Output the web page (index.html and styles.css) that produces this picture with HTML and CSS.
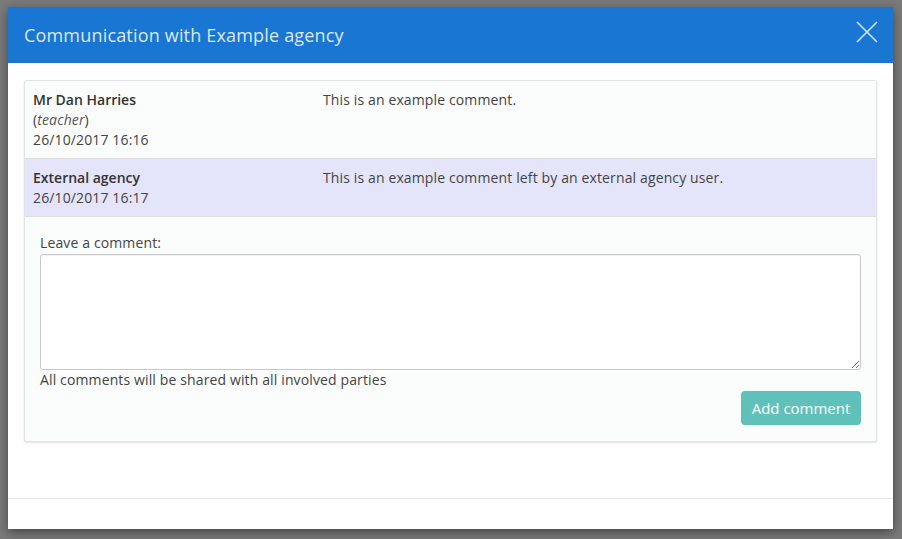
FILE: index.html
```html
<!DOCTYPE html>
<html lang="en">
<head>
<meta charset="utf-8">
<title>Communication with Example agency</title>
<link rel="stylesheet" href="styles.css">
</head>
<body>
<div class="backdrop">
  <div class="modal">
    <div class="modal-header">
      <h1 class="modal-title">Communication with Example agency</h1>
      <button class="close" aria-label="Close">
        <svg width="22" height="22" viewBox="0 0 22 22"><path d="M1 1 L21 21 M21 1 L1 21" stroke="#d2e3f6" stroke-width="1.6" fill="none"/></svg>
      </button>
    </div>
    <div class="modal-body">
      <div class="panel">
        <div class="comment">
          <div class="author">
            <div class="name">Mr Dan Harries</div>
            <div class="role">(<em>teacher</em>)</div>
            <div class="date">26/10/2017 16:16</div>
          </div>
          <div class="text">This is an example comment.</div>
        </div>
        <div class="comment external">
          <div class="author">
            <div class="name">External agency</div>
            <div class="date">26/10/2017 16:17</div>
          </div>
          <div class="text">This is an example comment left by an external agency user.</div>
        </div>
        <form class="comment-form">
          <label class="label" for="c">Leave a comment:</label>
          <textarea id="c" class="input"></textarea>
          <div class="help">All comments will be shared with all involved parties</div>
          <div class="actions"><button type="button" class="btn">Add comment</button></div>
        </form>
      </div>
    </div>
    <div class="modal-footer"></div>
  </div>
</div>
</body>
</html>
```
FILE: styles.css
```css
html, body {
  margin: 0;
  padding: 0;
  height: 100%;
}
body {
  background: #7a7a7a;
  font-family: "Open Sans", "Noto Sans", sans-serif;
  font-size: 14px;
  line-height: 20px;
  letter-spacing: 0.13px;
  color: #3a3a3a;
}
.backdrop {
  padding: 7px 0 0 8px;
}
.modal {
  width: 885px;
  height: 522px;
  background: #fff;
  display: flex;
  flex-direction: column;
  box-shadow: 0 3px 10px rgba(0,0,0,0.45);
}
.modal-header {
  height: 56px;
  background: #1976d2;
  display: flex;
  align-items: center;
  justify-content: space-between;
  padding: 0 15px 0 16px;
  flex: none;
}
.modal-title {
  margin: 0;
  font-size: 18px;
  font-weight: 400;
  letter-spacing: 0.18px;
  color: #dae8f8;
  line-height: 24px;
}
.close {
  background: none;
  border: 0;
  padding: 0;
  width: 22px;
  height: 22px;
  margin-top: -6px;
  display: flex;
}
.modal-body {
  flex: 1;
  padding: 17px 16px 0 16px;
}
.modal-footer {
  height: 30px;
  border-top: 1px solid #e6e6e6;
  flex: none;
}
.panel {
  background: #fbfcfc;
  border: 1px solid #e2e4e4;
  border-radius: 2px;
  box-shadow: 0 1px 2px rgba(0,0,0,0.12);
}
.comment {
  display: flex;
  padding: 9px 8px 8px 8px;
  border-bottom: 1px solid #dedede;
}
.comment.external {
  background: #e4e4fa;
}
.author {
  width: 290px;
  flex: none;
}
.name {
  font-weight: 600;
  letter-spacing: 0;
  color: #333;
}
.role em {
  font-style: italic;
  color: #555;
}
.date {
  color: #444;
}
.text {
  color: #444;
}
.comment-form {
  padding: 16px 15px 16px 15px;
  display: flex;
  flex-direction: column;
}
.label {
  color: #444;
  margin-bottom: 1px;
}
.input {
  height: 116px;
  box-sizing: border-box;
  margin: 0;
  border: 1px solid #c9c9c9;
  border-radius: 3px;
  background: #fff;
  box-shadow: inset 0 1px 1px rgba(0,0,0,0.06);
  font-family: inherit;
  font-size: 14px;
}
.help {
  color: #444;
}
.actions {
  display: flex;
  justify-content: flex-end;
  margin-top: 1px;
}
.btn {
  width: 120px;
  height: 34px;
  border: 0;
  border-radius: 4px;
  background: #5fc1b9;
  color: #fff;
  font-family: inherit;
  font-size: 15px;
  letter-spacing: 0;
  padding: 0;
}
```
